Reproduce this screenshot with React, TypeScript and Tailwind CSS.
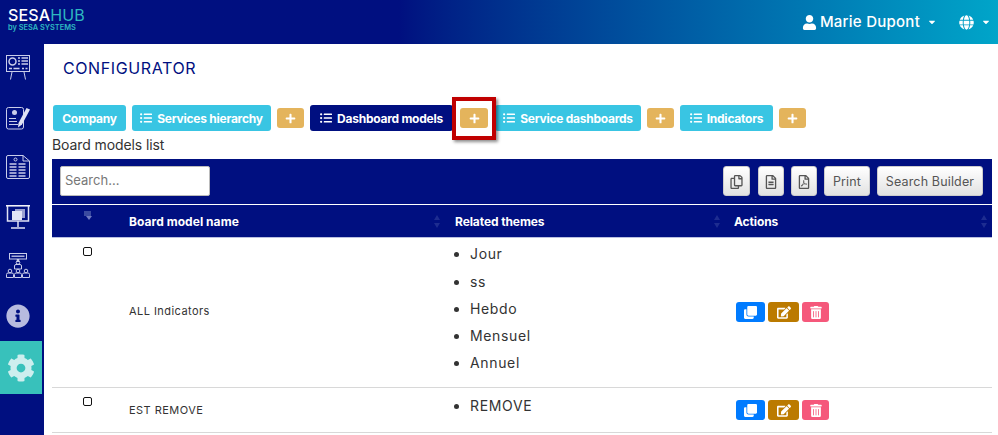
import React from "react";
import { FaUser, FaGlobe, FaInfoCircle, FaCog, FaRegCopy, FaRegFileAlt, FaRegFilePdf, FaClone, FaEdit, FaTrashAlt, FaListUl, FaPlus, FaCaretDown } from "react-icons/fa";

const font = { fontFamily: "Inter, 'Open Sans', sans-serif" };

function Tab({ label, active, list = true, w }: { label: string; active?: boolean; list?: boolean; w: string }) {
  return (
    <div className={`${w} ${active ? "bg-[#000f80]" : "bg-[#39c5e3]"} h-[26px] rounded-[3px] flex items-center justify-center gap-[5px] text-white text-[12px] font-bold tracking-[-0.25px] shrink-0 pt-[1px]`}>
      {list && <FaListUl className="w-3 h-3 -mt-[1px]" />}
      <span>{label}</span>
    </div>
  );
}

function Add({ w = "w-[27px]" }: { w?: string }) {
  return (
    <div className={`${w} h-[20px] bg-[#e4b45c] rounded-[3px] flex items-center justify-center text-white shrink-0`}>
      <FaPlus className="w-[11px] h-[11px]" />
    </div>
  );
}

function ToolBtn({ children, w }: { children: React.ReactNode; w: string }) {
  return (
    <div className={`${w} h-[30px] pt-[2px] rounded-[3px] border border-[#ccc] bg-gradient-to-b from-white to-[#e2e2e2] flex items-center justify-center text-[#555] text-[12.5px] tracking-[0.15px] shrink-0`}>
      {children}
    </div>
  );
}

function Sort() {
  return (
    <svg width="6" height="13" viewBox="0 0 6 13" className="shrink-0">
      <path d="M3 0 L6 5 L0 5 Z M3 13 L6 8 L0 8 Z" fill="#1d2c90" />
    </svg>
  );
}

function Actions() {
  return (
    <div className="flex gap-[3px] pl-[2px]">
      <div className="w-[29px] h-[20px] rounded-[3px] bg-[#007bff] flex items-center justify-center text-white"><FaClone className="w-[13px] h-[13px]" /></div>
      <div className="w-[31px] h-[20px] rounded-[3px] bg-[#bb7a00] flex items-center justify-center text-white"><FaEdit className="w-[14px] h-[13px]" /></div>
      <div className="w-[27px] h-[20px] rounded-[3px] bg-[#f5587b] flex items-center justify-center text-white"><FaTrashAlt className="w-[12px] h-[13px]" /></div>
    </div>
  );
}

function Check() {
  return <div className="w-[9px] h-[9px] rounded-[2px] border border-[#111] bg-white" />;
}

const S = { stroke: "#c9cdea", strokeWidth: 1, fill: "none" };

function Icon1() {
  return (
    <svg width="24" height="25" viewBox="0 0 24 25">
      <rect x="0.5" y="0.5" width="23" height="16" {...S} />
      <circle cx="6.5" cy="6.5" r="3.5" {...S} strokeWidth={1.5} />
      <path d="M12 3h2M15.500 3h6.500M12 6h2M15.500 6h6.500M12 9h2M15.500 9h6.500M3 13.500h3M7.500 13.500h6M16 13.500h2M19.500 13.500h2" {...S} strokeWidth={1.5} />
      <path d="M6 17 L4.500 24.500 M18 17 L19.500 24.500" {...S} />
    </svg>
  );
}
function Icon2() {
  return (
    <svg width="24" height="23" viewBox="0 0 24 23">
      <rect x="0.5" y="0.5" width="17" height="21.500" rx="2" {...S} />
      <circle cx="8.500" cy="5.500" r="2.500" fill="#c9cdea" />
      <path d="M3 11.500h7M3 14.500h8M3 17.500h9" {...S} />
      <path d="M12.500 16 L20.500 1 L24 2.500 L16 17.500 L12 20.500 Z" fill="#dfe2f5" />
    </svg>
  );
}
function Icon3() {
  return (
    <svg width="24" height="24" viewBox="0 0 24 24">
      <path d="M2 .5h15l6.500 5.500v16a1.500 1.500 0 0 1-1.500 1.500H2A1.500 1.500 0 0 1 .5 22V2A1.500 1.500 0 0 1 2 .5z" {...S} />
      <path d="M17 .5v5.500h6.500" {...S} />
      <circle cx="9.500" cy="4.500" r="1.500" {...S} />
      <path d="M3.500 9h7M12.500 9h7M3.500 12h7M12.500 12h7M3.500 15h7M12.500 15h7M3.500 18h7M12.500 18h7M3.500 21h7M12.500 21h7" stroke="#c9cdea" strokeWidth={1.4} />
    </svg>
  );
}
function Icon4() {
  return (
    <svg width="24" height="24" viewBox="0 0 24 24">
      <path d="M0 .8h24" stroke="#fff" strokeWidth={1.5} />
      <path d="M1.500 1v15h21V1" stroke="#dfe2f5" strokeWidth={1.5} fill="none" />
      <rect x="9" y="4" width="10" height="9" fill="#9aa0d0" />
      <rect x="6" y="6" width="10" height="9" fill="#dfe2f5" />
      <path d="M12 16v6M5 23h14" stroke="#dfe2f5" strokeWidth={1.5} />
    </svg>
  );
}
function Person({ x, y }: { x: number; y: number }) {
  return (
    <g>
      <circle cx={x} cy={y + 2} r="1.800" {...S} />
      <path d={`M${x - 3.5} ${y + 8.500}v-3q0-1.500 1.500-1.500h4q1.500 0 1.500 1.500v3z`} {...S} />
    </g>
  );
}
function Icon5() {
  return (
    <svg width="24" height="25" viewBox="0 0 24 25">
      <rect x="3.500" y="0.500" width="17" height="5.500" {...S} />
      <path d="M5.500 3.200h13" stroke="#c9cdea" strokeWidth={1.300} />
      <path d="M12 6v3" stroke="#c9cdea" strokeWidth={2.500} />
      <Person x={12} y={7.500} />
      <Person x={4} y={16} />
      <Person x={12} y={16} />
      <Person x={20} y={16} />
    </svg>
  );
}

export default function App() {
  return (
    <div style={font} className="w-[998px] h-[435px] overflow-hidden bg-white flex flex-col relative">
      <header className="h-[44px] shrink-0 bg-gradient-to-r from-[#000f80] from-40% to-[#03a5c9] flex items-center justify-between pl-[8px] pr-[7px]">
        <div className="flex flex-col leading-none -mt-[5px]">
          <div className="text-[16px] leading-[16px] tracking-[0.15px]">
            <span className="text-white font-medium">SESA</span><span className="text-[#2eb8c0] font-normal">HUB</span>
          </div>
          <div className="text-[7.4px] font-semibold text-[#2eb8c0] leading-[8px] mt-[1px]">by SESA SYSTEMS</div>
        </div>
        <div className="flex items-center text-white">
          <FaUser className="w-[15px] h-[15px] mr-[2px]" />
          <span className="text-[15px] font-medium ml-[1px] tracking-[0.25px]">Marie Dupont</span>
          <FaCaretDown className="w-[10px] h-[10px] ml-[7px]" />
          <FaGlobe className="w-[15px] h-[15px] ml-[22px]" />
          <FaCaretDown className="w-[10px] h-[10px] ml-[7px]" />
        </div>
      </header>
      <div className="flex flex-1 min-h-0">
        <aside className="w-[44px] shrink-0 bg-[#000f80] flex flex-col">
          <div className="w-[36px] pt-[11px] flex justify-center"><Icon1 /></div>
          <div className="w-[36px] pt-[27px] flex justify-center"><Icon2 /></div>
          <div className="w-[36px] pt-[25px] flex justify-center"><Icon3 /></div>
          <div className="w-[36px] pt-[26px] flex justify-center"><Icon4 /></div>
          <div className="w-[36px] pt-[24px] flex justify-center"><Icon5 /></div>
          <div className="w-[36px] pt-[26px] flex justify-center text-[#b7bbdf]"><FaInfoCircle className="w-[24px] h-[24px]" /></div>
          <div className="mt-[13px] h-[53px] w-[42px] bg-[#38c1bb] flex items-center justify-center text-[#cdeeee]"><FaCog className="w-[28px] h-[28px]" /></div>
        </aside>
        <main className="flex-1 min-w-0 pl-[8px] pr-[6px]">
          <h1 className="pl-[11px] pt-[14px] text-[#000f80] text-[16px] leading-[20px] font-normal tracking-[0.6px]">CONFIGURATOR</h1>
          <div className="mt-[27px] flex items-center pl-[1px]">
            <Tab label="Company" list={false} w="w-[73px]" />
            <div className="w-[6px]" />
            <Tab label="Services hierarchy" w="w-[139px]" />
            <div className="w-[6px]" />
            <Add />
            <div className="w-[6px]" />
            <Tab label="Dashboard models" active w="w-[143px]" />
            <div className="w-[7px]" />
            <Add w="w-[28px]" />
            <div className="w-[7px]" />
            <Tab label="Service dashboards" w="w-[146px]" />
            <div className="w-[6px]" />
            <Add />
            <div className="w-[6px]" />
            <Tab label="Indicators" w="w-[93px]" />
            <div className="w-[6px]" />
            <Add />
          </div>
          <div className="mt-[6px] text-[14px] leading-[16px] text-[#333] tracking-[-0.1px]">Board models list</div>
          <div className="mt-[6px] h-[45px] pb-[1px] bg-[#000f80] flex items-center justify-between pl-[8px] pr-[9px]">
            <div className="w-[150px] h-[30px] bg-white rounded-[2px] border border-[#bbb] flex items-center pl-[4px] text-[13px] text-[#777]">Search...</div>
            <div className="flex items-center">
              <ToolBtn w="w-[27px]"><FaRegCopy className="w-[13px] h-[14px]" /></ToolBtn>
              <div className="w-[8px]" />
              <ToolBtn w="w-[26px]"><FaRegFileAlt className="w-[12px] h-[14px]" /></ToolBtn>
              <div className="w-[7px]" />
              <ToolBtn w="w-[26px]"><FaRegFilePdf className="w-[12px] h-[14px]" /></ToolBtn>
              <div className="w-[7px]" />
              <ToolBtn w="w-[46px]">Print</ToolBtn>
              <div className="w-[7px]" />
              <ToolBtn w="w-[106px]">Search Builder</ToolBtn>
            </div>
          </div>
          <div className="border-t border-white h-[31px] pt-[1px] bg-[#000f80] border-b border-b-[#b9bfe0] grid grid-cols-[66px_337px_279px_1fr] items-center text-white text-[12px] font-bold box-content -mb-px">
            <div className="pl-[32px] -mt-[12px]">
              <svg width="9" height="9" viewBox="0 0 9 9"><rect x="0" y="0" width="7" height="5" fill="#3a4aa0" /><path d="M2 5h6L5 9z" fill="#6f7ac0" /></svg>
            </div>
            <div className="pl-[11px] flex items-center justify-between pr-[15px] tracking-[0.05px]"><span>Board model name</span><Sort /></div>
            <div className="flex items-center justify-between pr-[14px] tracking-[-0.1px]"><span>Related themes</span><Sort /></div>
            <div className="flex items-center justify-between pr-[5px] tracking-[-0.1px]"><span>Actions</span><Sort /></div>
          </div>
          <div className="h-[151px] border-b border-[#d8d8d8] grid grid-cols-[66px_337px_279px_1fr] items-center text-[11px] text-[#333] tracking-[0.45px]">
            <div className="self-start pl-[31px] pt-[10px]"><Check /></div>
            <div className="pl-[11px] -mt-[1px]">ALL Indicators</div>
            <ul className="list-disc pl-[15px] -mt-[7px] text-[14px] text-[#333] leading-[27.3px] tracking-[0.65px]">
              <li>Jour</li><li>ss</li><li>Hebdo</li><li>Mensuel</li><li>Annuel</li>
            </ul>
            <Actions />
          </div>
          <div className="h-[45px] border-b border-[#d8d8d8] grid grid-cols-[66px_337px_279px_1fr] items-center text-[11px] text-[#333] tracking-[0.45px]">
            <div className="self-start pl-[31px] pt-[9px]"><Check /></div>
            <div className="pl-[11px]">EST REMOVE</div>
            <ul className="list-disc pl-[15px] text-[14px] text-[#333] leading-[27px] -mt-[9px] tracking-[0.65px]"><li>REMOVE</li></ul>
            <Actions />
          </div>
        </main>
      </div>
      <div className="absolute left-[452px] top-[97px] w-[44px] h-[43px] border-[4px] border-[#c00000] shadow-[2px_2px_3px_rgba(0,0,0,0.45)]" />
    </div>
  );
}
